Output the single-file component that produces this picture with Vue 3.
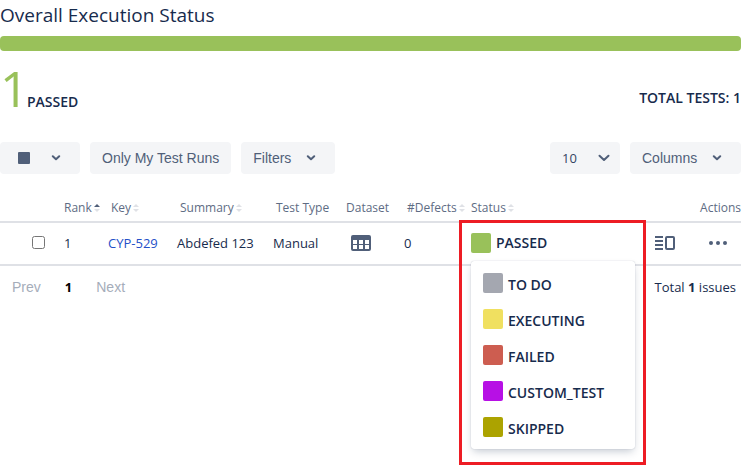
<script setup>
import { ref } from 'vue'

const columns = [
  { label: 'Rank', sort: 'asc', cls: 'c-rank' },
  { label: 'Key', sort: 'none', cls: 'c-key inset' },
  { label: 'Summary', sort: 'none', cls: 'c-summary inset' },
  { label: 'Test Type', cls: 'c-type inset' },
  { label: 'Dataset', cls: 'c-dataset inset' },
  { label: '#Defects', sort: 'none', cls: 'c-defects inset' },
  { label: 'Status', sort: 'none', cls: 'c-status' },
]
const statuses = [
  { name: 'TO DO', cls: 'todo' },
  { name: 'EXECUTING', cls: 'executing' },
  { name: 'FAILED', cls: 'failed' },
  { name: 'CUSTOM_TEST', cls: 'custom' },
  { name: 'SKIPPED', cls: 'skipped' },
]
const selected = ref(false)
const pageSize = ref('10')
</script>

<template>
  <main class="page">
    <h1>Overall Execution Status</h1>
    <div class="progress"></div>
    <section class="totals">
      <div class="passed"><span class="count">1</span><strong>PASSED</strong></div>
      <strong class="total">TOTAL TESTS: 1</strong>
    </section>

    <div class="toolbar">
      <button class="btn bulk" aria-label="Bulk actions">
        <span class="block"></span>
        <svg class="chev" viewBox="0 0 10 6"><path d="M1.8 1.3 5 4.3 8.2 1.3" /></svg>
      </button>
      <button class="btn">Only My Test Runs</button>
      <button class="btn filters">Filters
        <svg class="chev" viewBox="0 0 10 6"><path d="M1.8 1.3 5 4.3 8.2 1.3" /></svg>
      </button>
      <div class="btn size">
        <select v-model="pageSize" aria-label="Rows per page">
          <option>10</option>
          <option>25</option>
        </select>
        <svg class="chev big" viewBox="0 0 12 8"><path d="M1.5 1.7 6 6 10.5 1.7" /></svg>
      </div>
      <button class="btn columns">Columns
        <svg class="chev" viewBox="0 0 10 6"><path d="M1.8 1.3 5 4.3 8.2 1.3" /></svg>
      </button>
    </div>

    <table>
      <thead>
        <tr>
          <th class="c-check"></th>
          <th v-for="c in columns" :key="c.label" :class="c.cls">
            {{ c.label }}<svg v-if="c.sort" class="sort" :class="c.sort" viewBox="0 0 6 8">
              <path class="up" d="M0 3 3 0 6 3Z" /><path d="M0 5 3 8 6 5Z" />
            </svg>
          </th>
          <th class="c-actions">Actions</th>
        </tr>
      </thead>
      <tbody>
        <tr>
          <td class="c-check"><input v-model="selected" type="checkbox" aria-label="Select CYP-529" /></td>
          <td>1</td>
          <td><a href="#CYP-529">CYP-529</a></td>
          <td>Abdefed 123</td>
          <td>Manual</td>
          <td class="dataset">
            <button class="icon" aria-label="Dataset">
              <svg width="20" height="16" viewBox="0 0 20 16">
                <path fill="#505f79" fill-rule="evenodd" d="M2 0H18Q20 0 20 2V14Q20 16 18 16H2Q0 16 0 14V2Q0 0 2 0ZM2 5V9H6V5ZM8 5V9H12V5ZM14 5V9H18V5ZM2 10V14H6V10ZM8 10V14H12V10ZM14 10V14H18V10Z" />
              </svg>
            </button>
          </td>
          <td>0</td>
          <td class="status-cell">
            <button class="status"><span class="swatch pass"></span><strong>PASSED</strong></button>
            <div class="frame"></div>
            <ul class="menu">
              <li v-for="s in statuses" :key="s.name">
                <button class="status"><span class="swatch" :class="s.cls"></span><strong>{{ s.name }}</strong></button>
              </li>
            </ul>
          </td>
          <td>
            <div class="actions">
              <button class="icon" aria-label="Open details">
                <svg width="20" height="14" viewBox="0 0 20 14">
                  <path fill="#505f79" d="M0 0H8V2H0ZM0 4H8V6H0ZM0 8H8V10H0ZM0 12H8V14H0Z" />
                  <rect x="11" y="1" width="8" height="12" rx="1" fill="none" stroke="#505f79" stroke-width="2" />
                </svg>
              </button>
              <button class="icon" aria-label="More actions">
                <svg width="18" height="4" viewBox="0 0 18 4" fill="#505f79">
                  <circle cx="2" cy="2" r="2" /><circle cx="9" cy="2" r="2" /><circle cx="16" cy="2" r="2" />
                </svg>
              </button>
            </div>
          </td>
        </tr>
      </tbody>
    </table>

    <footer>
      <nav>
        <button disabled>Prev</button>
        <button class="current">1</button>
        <button disabled>Next</button>
      </nav>
      <p>Total <strong>1</strong> issues</p>
    </footer>
  </main>
</template>

<style>
body {
  background: #fff;
}
</style>

<style scoped>
* {
  box-sizing: border-box;
}
.page {
  min-height: 100vh;
  font-family: "Open Sans", "Noto Sans", sans-serif;
  font-size: 13px;
  line-height: 20px;
  color: #172b4d;
}
button {
  border: 0;
  padding: 0;
  background: none;
  font: inherit;
  color: inherit;
}
strong {
  font-weight: 700;
}
h1 {
  margin: 0;
  padding: 3px 0 9px;
  font-size: 19px;
  line-height: 24px;
  font-weight: 500;
}
.progress {
  height: 15px;
  border-radius: 4px;
  background: #99c15a;
}
.totals {
  display: flex;
  justify-content: space-between;
  height: 91px;
  padding-top: 12px;
}
.passed {
  display: flex;
  align-items: baseline;
  height: 60px;
}
.totals strong,
.status strong {
  font-size: 14px;
  font-weight: 600;
}
.count {
  width: 27px;
  font-size: 50px;
  line-height: 50px;
  font-weight: 400;
  color: #99c15a;
}
.total {
  padding-top: 25px;
}
.toolbar {
  display: flex;
  gap: 10px;
}
.btn {
  display: flex;
  align-items: center;
  justify-content: space-between;
  height: 32px;
  padding: 0 12px;
  border-radius: 4px;
  background: #f4f5f7;
  color: #505f79;
  font-family: "Liberation Sans", Arial, sans-serif;
  font-size: 14px;
  white-space: nowrap;
}
.bulk {
  width: 80px;
  padding: 0 19px 0 18px;
}
.block {
  width: 12px;
  height: 12px;
  border-radius: 1px;
  background: #505f79;
}
.filters {
  width: 94px;
  padding-right: 19px;
}
.size {
  position: relative;
  width: 70px;
  margin-left: auto;
  padding: 0;
}
.size select {
  width: 100%;
  height: 32px;
  padding: 0 12px;
  border: 0;
  background: none;
  appearance: none;
  font-family: "Open Sans", sans-serif;
  font-size: 13px;
  color: #344563;
}
.columns {
  width: 111px;
  padding-right: 19px;
}
.chev {
  width: 10px;
  height: 6px;
  fill: none;
  stroke: #505f79;
  stroke-width: 2;
  stroke-linecap: round;
  stroke-linejoin: round;
}
.big {
  position: absolute;
  right: 10px;
  top: 12px;
  width: 12px;
  height: 8px;
  pointer-events: none;
}
table {
  width: 100%;
  margin-top: 20px;
  table-layout: fixed;
  border-collapse: collapse;
}
th {
  height: 28px;
  padding: 0;
  border-bottom: 2px solid #dfe1e6;
  font-size: 12px;
  font-weight: 500;
  text-align: left;
  white-space: nowrap;
  color: #5e6c84;
}
th.inset {
  padding-left: 3px;
}
td {
  position: relative;
  height: 43px;
  padding: 0 0 2px;
  border-bottom: 2px solid #dfe1e6;
  white-space: nowrap;
}
.c-check { width: 64px; }
.c-rank { width: 44px; }
.c-key { width: 69px; }
.c-summary { width: 96px; }
.c-type { width: 70px; }
.c-dataset { width: 61px; }
.c-defects { width: 67px; }
.c-actions {
  width: 86px;
  text-align: right;
}
.sort {
  width: 6px;
  height: 8px;
  margin-left: 2px;
  fill: #dfe1e6;
}
.asc .up {
  fill: #505f79;
}
td input {
  display: block;
  width: 13px;
  height: 13px;
  margin: 0 0 0 32px;
}
a {
  color: #2450c8;
  text-decoration: none;
}
.icon {
  display: flex;
}
.dataset {
  padding-left: 8px;
}
.status {
  display: flex;
  align-items: center;
  gap: 5px;
}
.swatch {
  width: 20px;
  height: 20px;
  border-radius: 2px;
}
.pass { background: #99c15a; }
.todo { background: #a4a7b0; }
.executing { background: #f0e060; }
.failed { background: #cd5d50; }
.custom { background: #b710e5; }
.skipped { background: #aca300; }
.frame {
  position: absolute;
  top: -3px;
  left: -12px;
  width: 187px;
  height: 245px;
  border: 3px solid #ed1c24;
  pointer-events: none;
}
.menu {
  position: absolute;
  top: 38px;
  left: 0;
  width: 164px;
  margin: 0;
  padding: 4px 0;
  border-radius: 3px;
  background: #fff;
  box-shadow: 0 4px 8px -2px #091e4240, 0 0 1px #091e424f;
  list-style: none;
}
.menu li {
  height: 36px;
  padding: 8px 12px;
}
.menu .status {
  height: 20px;
}
.menu strong {
  padding-top: 3px;
}
.actions {
  display: flex;
  align-items: center;
  justify-content: space-between;
  padding-right: 14px;
}
footer {
  display: flex;
  justify-content: space-between;
  padding: 11px 5px 0 12px;
}
nav {
  display: flex;
  gap: 24px;
  font-family: "Liberation Sans", Arial, sans-serif;
  font-size: 14px;
  color: #a5adba;
}
.current {
  font-family: "Open Sans", sans-serif;
  font-size: 13px;
  font-weight: 700;
  color: #000;
}
p {
  margin: 0;
}
</style>
